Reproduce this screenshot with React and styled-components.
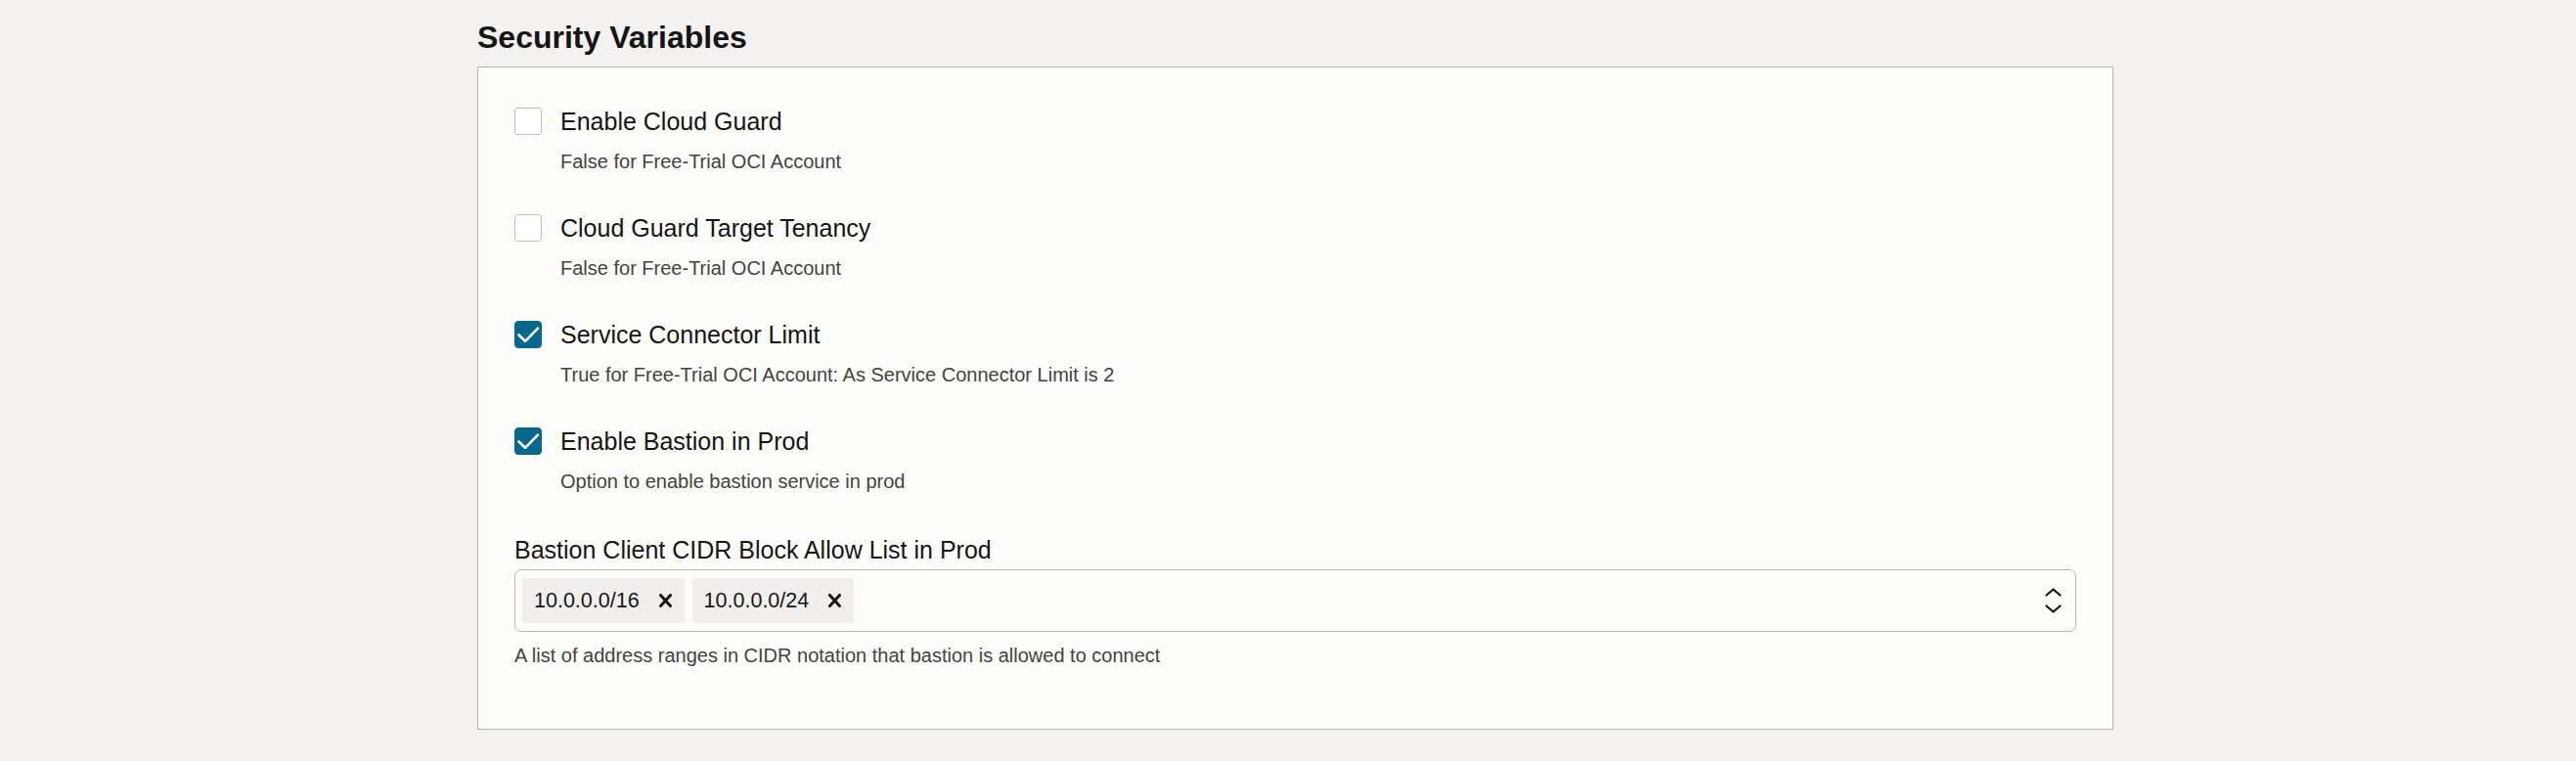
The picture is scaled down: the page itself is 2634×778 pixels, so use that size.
import styled, { createGlobalStyle } from 'styled-components';

const GlobalStyle = createGlobalStyle`
  html, body {
    margin: 0;
    padding: 0;
    background: #f3f2f0;
  }
  body {
    font-family: 'Liberation Sans', Arial, sans-serif;
    color: #161513;
  }
`;

const options = [
  { label: 'Enable Cloud Guard', help: 'False for Free-Trial OCI Account', checked: false },
  { label: 'Cloud Guard Target Tenancy', help: 'False for Free-Trial OCI Account', checked: false },
  {
    label: 'Service Connector Limit',
    help: 'True for Free-Trial OCI Account: As Service Connector Limit is 2',
    checked: true,
  },
  { label: 'Enable Bastion in Prod', help: 'Option to enable bastion service in prod', checked: true },
];

const cidrs = ['10.0.0.0/16', '10.0.0.0/24'];

function CheckIcon() {
  return (
    <svg width='28' height='28' viewBox='0 0 28 28'>
      <path
        d='M4.5 14.5 L11 20.8 L24 7.6'
        fill='none'
        stroke='#fff'
        strokeWidth='2.6'
        strokeLinecap='round'
        strokeLinejoin='round'
      />
    </svg>
  );
}

function CloseIcon() {
  return (
    <svg width='13' height='14' viewBox='0 0 13 14'>
      <path d='M1.5 1.5 L11.5 12.5 M11.5 1.5 L1.5 12.5' stroke='#161513' strokeWidth='3' strokeLinecap='round' />
    </svg>
  );
}

function Chevrons() {
  return (
    <svg width='17' height='26' viewBox='0 0 17 26'>
      <path
        d='M1.5 7.5 L8.5 1.5 L15.5 7.5 M1.5 18.5 L8.5 24.5 L15.5 18.5'
        fill='none'
        stroke='#161513'
        strokeWidth='2.2'
        strokeLinecap='round'
        strokeLinejoin='round'
      />
    </svg>
  );
}

export default function App() {
  return (
    <>
      <GlobalStyle />
      <Page>
        <Title>Security Variables</Title>
        <Panel>
          {options.map((o) => (
            <Item key={o.label}>
              <CheckRow>
                <Box $checked={o.checked}>{o.checked && <CheckIcon />}</Box>
                <Label>{o.label}</Label>
              </CheckRow>
              <Help $indent>{o.help}</Help>
            </Item>
          ))}
          <Field>
            <Label>Bastion Client CIDR Block Allow List in Prod</Label>
            <Select>
              {cidrs.map((c) => (
                <Chip key={c}>
                  <span>{c}</span>
                  <CloseIcon />
                </Chip>
              ))}
              <Spinner>
                <Chevrons />
              </Spinner>
            </Select>
            <Help>A list of address ranges in CIDR notation that bastion is allowed to connect</Help>
          </Field>
        </Panel>
      </Page>
    </>
  );
}

const Page = styled.main`
  padding: 19px 0 20px 488px;
`;

const Title = styled.h2`
  margin: 0 0 11px;
  font-size: 32px;
  line-height: 38px;
  font-weight: 700;
  color: #161513;
`;

const Panel = styled.section`
  box-sizing: border-box;
  width: 1673px;
  padding: 40px 37px 63px;
  background: #fcfcfa;
  border: 1px solid #b9b5ae;
  display: flex;
  flex-direction: column;
  gap: 41px;
`;

const Item = styled.div`
  display: flex;
  flex-direction: column;
`;

const CheckRow = styled.div`
  display: flex;
  align-items: center;
  gap: 19px;
  margin-bottom: 14px;
`;

const Box = styled.span`
  box-sizing: border-box;
  width: 28px;
  height: 28px;
  border-radius: 4px;
  display: flex;
  flex-shrink: 0;
  background: ${(p) => (p.$checked ? '#04678c' : '#ffffff')};
  border: 1px solid ${(p) => (p.$checked ? '#04678c' : '#c2beb8')};
  svg {
    margin: -1px;
  }
`;

const Label = styled.div`
  font-size: 25px;
  line-height: 30px;
  color: #161513;
`;

const Help = styled.div`
  font-size: 20px;
  line-height: 24px;
  color: #45433f;
  padding-left: ${(p) => (p.$indent ? '47px' : '0')};
`;

const Field = styled.div`
  display: flex;
  flex-direction: column;
  margin-top: 2px;
  ${Label} {
    margin-bottom: 5px;
  }
  ${Help} {
    margin-top: 12px;
  }
`;

const Select = styled.div`
  box-sizing: border-box;
  height: 64px;
  border: 1px solid #b9b5ae;
  border-radius: 7px;
  background: #fcfcfa;
  display: flex;
  align-items: center;
  gap: 8px;
  padding: 0 14px 0 7px;
`;

const Chip = styled.div`
  height: 46px;
  display: flex;
  align-items: center;
  gap: 20px;
  padding: 0 13px 0 12px;
  background: #f1efed;
  border-radius: 4px;
  font-size: 21.5px;
  color: #161513;
`;

const Spinner = styled.div`
  margin-left: auto;
  display: flex;
  align-items: center;
`;
